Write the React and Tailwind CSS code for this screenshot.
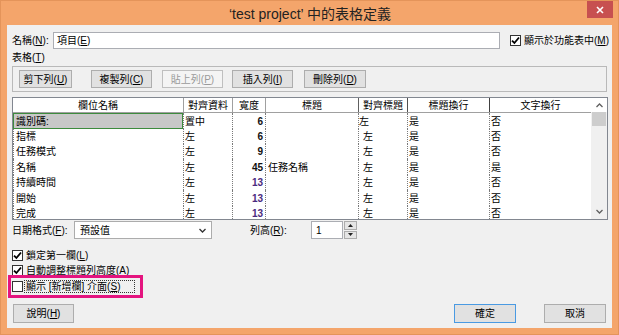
import React from "react";

const rows = [
  { name: "識別碼:", align: "置中", w: "6", title: "", at: "左", tw: "是", ww: "否", h: "h-[16px]", sel: true },
  { name: "指標", align: "左", w: "6", title: "", at: "左", tw: "是", ww: "否", h: "h-[15px]" },
  { name: "任務模式", align: "左", w: "9", title: "", at: "左", tw: "是", ww: "否", h: "h-[15px]" },
  { name: "名稱", align: "左", w: "45", title: "任務名稱", at: "左", tw: "是", ww: "是", h: "h-[16px]" },
  { name: "持續時間", align: "左", w: "13", title: "", at: "左", tw: "是", ww: "否", h: "h-[15px]" },
  { name: "開始", align: "左", w: "13", title: "", at: "左", tw: "是", ww: "否", h: "h-[16px]" },
  { name: "完成", align: "左", w: "13", title: "", at: "左", tw: "是", ww: "否", h: "h-[15px]" },
];

function Check({ on }) {
  return (
    <div className="w-[11px] h-[11px] shrink-0 border border-[#333333] bg-white flex items-center justify-center">
      {on && (
        <svg width="9" height="9" viewBox="0 0 9 9">
          <path d="M1 4.6 L3.4 7 L8 1.5" fill="none" stroke="#000" strokeWidth="1.8" />
        </svg>
      )}
    </div>
  );
}

function Btn({ children, className = "", disabled, primary }) {
  const look = disabled
    ? "border-[#bfbfbf] bg-[#f4f4f4] text-[#9a9a9a]"
    : primary
    ? "border-[#4a9ae2] bg-[#e1e1e1] text-black"
    : "border-[#adadad] bg-[#e1e1e1] text-black";
  return (
    <div className={`shrink-0 flex items-center justify-center border text-[10px] ${look} ${className}`}>
      {children}
    </div>
  );
}

const cell = "border-l border-dotted border-[#7a7a7a] flex items-center overflow-hidden whitespace-nowrap";

export default function App() {
  return (
    <div className="w-[619px] h-[335px] bg-[#f4a56b] border border-[#e4945a] flex flex-col font-['Liberation_Sans','Noto_Sans_CJK_TC',sans-serif] text-black">
      {/* title bar */}
      <div className="h-[24px] flex items-start shrink-0">
        <div className="w-[32px] shrink-0" />
        <div className="flex-1 h-full flex items-center justify-center pt-[2px] text-[14px] text-[#222]">
          ‘test project’ 中的表格定義
        </div>
        <div className="w-[26px] h-[17px] mr-[5px] bg-[#c75050] flex items-center justify-center">
          <svg width="8" height="8" viewBox="0 0 8 8">
            <path d="M1 1 L7 7 M7 1 L1 7" stroke="#fff" strokeWidth="1.6" />
          </svg>
        </div>
      </div>

      {/* client area */}
      <div className="relative flex-1 mx-[6px] mb-[6px] bg-[#f0f0f0] pt-[7px] pl-[5px] flex flex-col text-[10px]">
        {/* name row */}
        <div className="h-[17px] flex items-center">
          <div className="w-[41px]">名稱(<u>N</u>):</div>
          <div className="w-[447px] h-[17px] border border-[#abadb3] bg-white flex items-center pl-[3px]">
            項目(<u>E</u>)
          </div>
          <div className="ml-[10px] flex items-center gap-[3px]">
            <Check on />
            <span>顯示於功能表中(<u>M</u>)</span>
          </div>
        </div>

        <div className="h-[13px] mt-[2px] leading-[13px]">表格(<u>T</u>)</div>

        {/* button group */}
        <div className="mt-[2px] w-[595px] h-[26px] border border-[#b9b9b9] pt-[3px] flex items-start">
          <Btn className="ml-[6px] w-[53px] h-[18px]">剪下列(<u>U</u>)</Btn>
          <Btn className="ml-[19px] w-[61px] h-[18px]">複製列(<u>C</u>)</Btn>
          <Btn className="ml-[10px] w-[61px] h-[18px]" disabled>貼上列(<u>P</u>)</Btn>
          <Btn className="ml-[9px] w-[61px] h-[18px]">插入列(<u>I</u>)</Btn>
          <Btn className="ml-[11px] w-[62px] h-[18px]">刪除列(<u>D</u>)</Btn>
        </div>

        {/* table */}
        <div className="mt-[5px] w-[596px] h-[123px] border border-[#828790] bg-white flex">
          <div className="flex flex-col">
            <div className="h-[15px] flex border-b border-[#a0a0a0] shrink-0">
              <div className="w-[170px] flex items-center justify-center">欄位名稱</div>
              <div className="w-[49px] border-l border-[#a0a0a0] flex items-center justify-center">對齊資料</div>
              <div className="w-[33px] border-l border-[#a0a0a0] flex items-center justify-center">寬度</div>
              <div className="w-[93px] border-l border-[#a0a0a0] flex items-center justify-center">標題</div>
              <div className="w-[49px] border-l border-[#606060] flex items-center justify-center">對齊標題</div>
              <div className="w-[82px] border-l border-[#505050] flex items-center justify-center">標題換行</div>
              <div className="w-[102px] border-l border-[#404040] flex items-center justify-center">文字換行</div>
            </div>
            <div className="h-[106px] overflow-hidden">
              {rows.map((r, i) => (
                <div key={i} className={`${r.h} flex`}>
                  <div
                    className={
                      r.sel
                        ? "w-[170px] border border-[#3d8b3d] bg-[#c8c8c8] flex items-center pl-[2px] whitespace-nowrap"
                        : `w-[170px] pl-[2px] ${cell}`
                    }
                  >
                    {r.name}
                  </div>
                  <div className={`w-[49px] pl-[1px] ${cell}`}>{r.align}</div>
                  <div className={`w-[33px] pr-[2px] justify-end font-bold ${cell} ${r.w === "13" ? "text-[#4a2a7e]" : "text-[#111]"}`}>
                    {r.w}
                  </div>
                  <div className={`w-[93px] pl-[2px] ${cell}`}>{r.title}</div>
                  <div className={`w-[49px] ${r.sel ? "pl-0" : "pl-[4px]"} ${cell}`}>{r.at}</div>
                  <div className={`w-[82px] pl-[1px] ${cell}`}>{r.tw}</div>
                  <div className={`w-[102px] pl-[1px] ${cell}`}>{r.ww}</div>
                </div>
              ))}
            </div>
          </div>
          {/* scrollbar */}
          <div className="w-[16px] bg-[#f0f0f0] flex flex-col items-center">
            <div className="h-[14px] w-full flex items-center justify-center bg-white">
              <svg width="7" height="5" viewBox="0 0 7 5">
                <path d="M0.5 4 L3.5 1 L6.5 4" fill="none" stroke="#606060" strokeWidth="1.3" />
              </svg>
            </div>
            <div className="w-[14px] h-[14px] bg-[#cdcdcd]" />
            <div className="flex-1" />
            <div className="h-[15px] w-full flex items-center justify-center">
              <svg width="7" height="5" viewBox="0 0 7 5">
                <path d="M0.5 1 L3.5 4 L6.5 1" fill="none" stroke="#606060" strokeWidth="1.3" />
              </svg>
            </div>
          </div>
        </div>

        {/* date format / row height */}
        <div className="mt-[1px] h-[18px] flex items-center">
          <div className="w-[62px]">日期格式(<u>F</u>):</div>
          <div className="w-[138px] h-[18px] border border-[#acacac] bg-white flex items-center pl-[5px] pr-[5px] justify-between">
            <span>預設值</span>
            <svg width="7" height="5" viewBox="0 0 7 5">
              <path d="M0.5 1 L3.5 4 L6.5 1" fill="none" stroke="#333" strokeWidth="1.3" />
            </svg>
          </div>
          <div className="ml-[38px] w-[61px]">列高(<u>R</u>):</div>
          <div className="w-[32px] h-[18px] border border-[#abadb3] bg-white flex items-center pl-[4px]">1</div>
          <div className="ml-[1px] w-[13px] h-[18px] flex flex-col gap-[1px]">
            <div className="flex-1 border border-[#acacac] bg-[#e5e5e5] flex items-center justify-center">
              <svg width="5" height="3" viewBox="0 0 5 3"><path d="M0 3 L2.5 0 L5 3Z" fill="#222" /></svg>
            </div>
            <div className="flex-1 border border-[#acacac] bg-[#e5e5e5] flex items-center justify-center">
              <svg width="5" height="3" viewBox="0 0 5 3"><path d="M0 0 L2.5 3 L5 0Z" fill="#222" /></svg>
            </div>
          </div>
        </div>

        {/* checkboxes */}
        <div className="mt-[9px] h-[15px] flex items-center gap-[3px]">
          <Check on />
          <span>鎖定第一欄(<u>L</u>)</span>
        </div>
        <div className="h-[15px] flex items-center gap-[3px]">
          <Check on />
          <span>自動調整標題列高度(<u>A</u>)</span>
        </div>
        <div className="mt-[1px] h-[15px] flex items-center gap-[1px]">
          <Check />
          <span className="h-[13px] w-[111px] border border-dotted border-[#333] flex items-center pl-[1px] whitespace-nowrap">
            顯示 [新增欄] 介面(<u>S</u>)
          </span>
        </div>

        {/* buttons */}
        <div className="mt-[10px] flex items-center pr-[6px]">
          <Btn className="ml-[1px] w-[61px] h-[19px]">說明(<u>H</u>)</Btn>
          <div className="flex-1" />
          <Btn className="w-[62px] h-[19px]" primary>確定</Btn>
          <Btn className="ml-[28px] w-[62px] h-[19px]">取消</Btn>
        </div>

        {/* annotation highlight */}
        <div className="absolute left-[1px] top-[250px] w-[135px] h-[23px] border-[3px] border-[#e4147f]" />
      </div>
    </div>
  );
}
